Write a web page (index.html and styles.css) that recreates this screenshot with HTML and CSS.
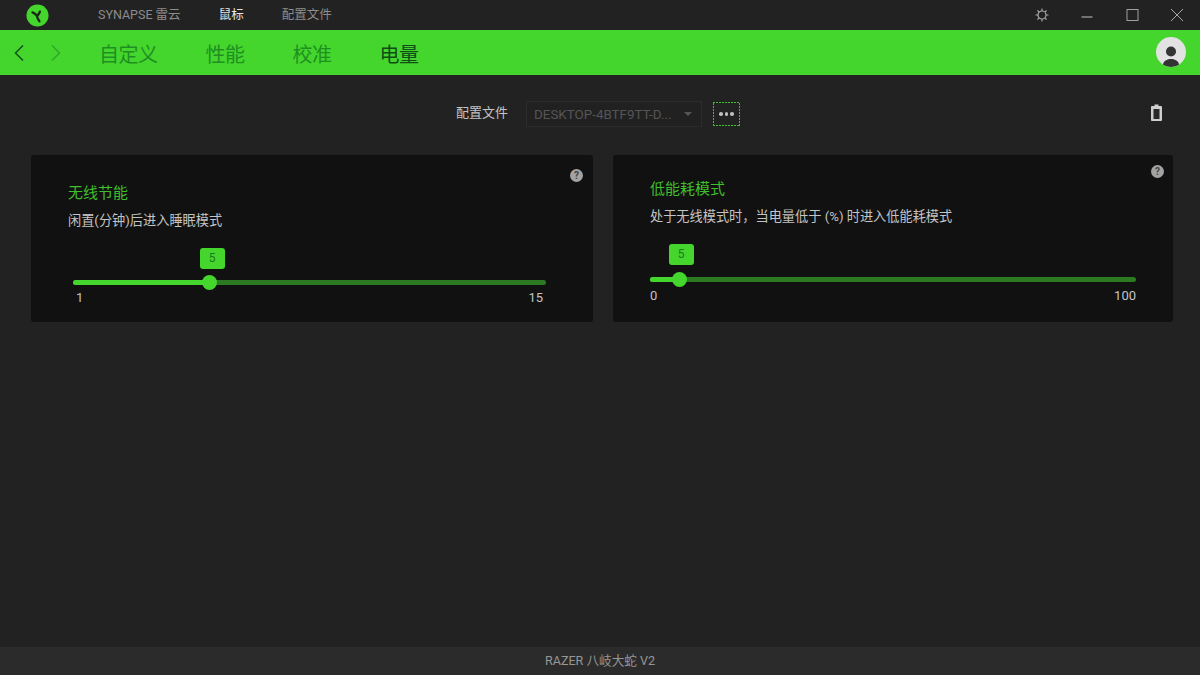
FILE: index.html
```html
<!DOCTYPE html>
<html lang="zh-CN">
<head>
<meta charset="utf-8">
<title>Razer Synapse</title>
<link rel="stylesheet" href="styles.css">
</head>
<body>
<div class="app">
  <header class="titlebar">
    <svg class="logo" viewBox="0 0 24 24" width="23" height="23">
      <circle cx="12" cy="12" r="11.5" fill="#44d62c"/>
      <path d="M11.500 12.500 Q11.800 15.500 14 18 M11.500 12.500 Q9.500 9.800 6.800 8.800 M11.500 12.500 Q13.500 10.800 14.500 8" stroke="#1a2a18" stroke-width="2.500" fill="none" stroke-linecap="round"/>
    </svg>
    <nav class="mainnav">
      <span class="mainnav-item">SYNAPSE 雷云</span>
      <span class="mainnav-item is-active">鼠标</span>
      <span class="mainnav-item">配置文件</span>
    </nav>
    <div class="winctrls">
      <svg class="winicon" viewBox="0 0 14 14" width="14" height="14">
        <circle cx="7" cy="7" r="4" fill="none" stroke="#a8a8a8" stroke-width="1.2"/>
        <path d="M7 0.500V3M7 11V13.500M0.500 7H3M11 7H13.500M2.400 2.400L4 4M10 10L11.600 11.600M2.400 11.600L4 10M10 4L11.600 2.400" stroke="#a8a8a8" stroke-width="1.100"/>
      </svg>
      <svg class="winicon" viewBox="0 0 14 14" width="14" height="14">
        <path d="M1.500 9H12.500" stroke="#a8a8a8" stroke-width="1.200"/>
      </svg>
      <svg class="winicon" viewBox="0 0 14 14" width="14" height="14">
        <rect x="2" y="1.500" width="11" height="11" fill="none" stroke="#a0a0a0" stroke-width="1"/>
      </svg>
      <svg class="winicon" viewBox="0 0 14 14" width="14" height="14">
        <path d="M1 1L13 13M13 1L1 13" stroke="#a8a8a8" stroke-width="1"/>
      </svg>
    </div>
  </header>

  <div class="tabbar">
    <svg class="arrow" viewBox="0 0 12 18" width="12" height="18">
      <path d="M10 1.500L2.500 9L10 16.500" fill="none" stroke="#14501a" stroke-width="1.500"/>
    </svg>
    <svg class="arrow arrow-next" viewBox="0 0 12 18" width="12" height="18">
      <path d="M2 1.500L9.500 9L2 16.500" fill="none" stroke="#2fa82a" stroke-width="1.500"/>
    </svg>
    <nav class="tabs">
      <span class="tab">自定义</span>
      <span class="tab">性能</span>
      <span class="tab">校准</span>
      <span class="tab is-active">电量</span>
    </nav>
    <svg class="avatar" viewBox="0 0 30 30" width="30" height="30">
      <defs><clipPath id="avatar-clip"><circle cx="15" cy="15" r="15"/></clipPath></defs>
      <circle cx="15" cy="15" r="15" fill="#e2e2e2"/>
      <g clip-path="url(#avatar-clip)">
        <circle cx="15" cy="14.500" r="5" fill="#333"/>
        <path d="M7 30V28C7 24.500 10.500 22 15 22S23 24.500 23 28V30Z" fill="#333"/>
      </g>
    </svg>
  </div>

  <main class="content">
    <div class="profile-row">
      <span class="profile-label">配置文件</span>
      <div class="select">
        <span class="select-text">DESKTOP-4BTF9TT-D...</span>
        <span class="select-caret"></span>
      </div>
      <button class="more" type="button"><i></i><i></i><i></i></button>
      <svg class="battery" viewBox="0 0 11 17" width="11" height="17">
        <path d="M3.500 0.500H7.500V2H10C10.500 2 11 2.500 11 3V16C11 16.500 10.500 17 10 17H1C0.500 17 0 16.500 0 16V3C0 2.500 0.500 2 1 2H3.500Z" fill="#cfcfcf"/>
        <rect x="2.500" y="5" width="6" height="10" fill="#2a2a2a"/>
      </svg>
    </div>

    <div class="cards">
      <section class="card card-left">
        <span class="help">?</span>
        <h2 class="card-title">无线节能</h2>
        <p class="card-desc">闲置(分钟)后进入睡眠模式</p>
        <div class="slider slider-left">
          <div class="track">
            <div class="fill" style="width:137px"></div>
            <div class="thumb" style="left:137px"></div>
            <div class="bubble" style="left:139px">5</div>
          </div>
          <div class="scale scale-left"><span>1</span><span>15</span></div>
        </div>
      </section>
      <section class="card card-right">
        <span class="help">?</span>
        <h2 class="card-title">低能耗模式</h2>
        <p class="card-desc">处于无线模式时，当电量低于 (%) 时进入低能耗模式</p>
        <div class="slider slider-right">
          <div class="track">
            <div class="fill" style="width:30px"></div>
            <div class="thumb" style="left:30px"></div>
            <div class="bubble" style="left:31px">5</div>
          </div>
          <div class="scale"><span>0</span><span>100</span></div>
        </div>
      </section>
    </div>
  </main>

  <footer class="statusbar">RAZER 八岐大蛇 V2</footer>
</div>
</body>
</html>
```
FILE: styles.css
```css
* { box-sizing: border-box; }
html, body { margin: 0; padding: 0; }
body {
  width: 1200px;
  height: 675px;
  overflow: hidden;
  background: #222;
  font-family: Roboto, "Noto Sans CJK SC", sans-serif;
}
.app { display: flex; flex-direction: column; height: 675px; }

.titlebar {
  height: 30px;
  flex: none;
  display: flex;
  align-items: center;
  background: #222;
  padding-left: 26px;
}
.logo { flex: none; }
.mainnav { display: flex; gap: 38px; margin-left: 49px; }
.mainnav-item { font-size: 12.500px; line-height: 30px; color: #8c8c8c; }
.mainnav-item.is-active { color: #e6e6e6; }
.winctrls { display: flex; align-items: center; gap: 31px; margin-left: auto; margin-right: 16px; }
.winicon { display: block; }

.tabbar {
  height: 45px;
  flex: none;
  display: flex;
  align-items: center;
  background: #44d62c;
  padding-left: 13px;
  padding-right: 14px;
}
.arrow { flex: none; margin-top: 1px; }
.arrow-next { margin-left: 25px; }
.tabs { display: flex; gap: 48px; margin-left: 37px; padding-top: 5px; }
.tab { font-size: 20px; line-height: 40px; color: #1f8f22; letter-spacing: -0.500px; }
.tab.is-active { color: #0f4d17; }
.avatar { margin-left: auto; margin-top: -1px; }

.content { flex: 1; display: flex; flex-direction: column; min-height: 0; }
.profile-row {
  display: flex;
  align-items: center;
  height: 26px;
  margin-top: 26px;
  padding-left: 456px;
}
.profile-label { font-size: 13px; line-height: 22px; padding-bottom: 3px; color: #c4c4c4; width: 70px; }
.select {
  width: 176px;
  height: 26px;
  display: flex;
  align-items: center;
  justify-content: space-between;
  padding: 0 9px 0 7px;
  background: #212121;
  border: 1px solid #2c2c2c;
}
.select-text { font-size: 13.400px; color: #555; white-space: nowrap; }
.select-caret {
  width: 0;
  height: 0;
  border-left: 4px solid transparent;
  border-right: 4px solid transparent;
  border-top: 4px solid #555;
}
.more {
  width: 27px;
  height: 24px;
  margin-left: 11px;
  padding: 0;
  display: flex;
  align-items: center;
  justify-content: center;
  gap: 2px;
  border: 0;
  background:
    repeating-linear-gradient(90deg, #3cc02a 0 2px, transparent 2px 3px) top / 100% 1px no-repeat,
    repeating-linear-gradient(90deg, #3cc02a 0 2px, transparent 2px 3px) bottom / 100% 1px no-repeat,
    repeating-linear-gradient(0deg, #3cc02a 0 2px, transparent 2px 3px) left / 1px 100% no-repeat,
    repeating-linear-gradient(0deg, #3cc02a 0 2px, transparent 2px 3px) right / 1px 100% no-repeat;
}
.more i { width: 3.500px; height: 3.500px; border-radius: 50%; background: #bdbdbd; }
.battery { margin-left: 411px; margin-top: -3px; }

.cards { display: flex; gap: 20px; margin-top: 28px; padding-left: 31px; }
.card {
  position: relative;
  height: 167px;
  background: #111;
  border-radius: 3px;
}
.card-left { width: 562px; padding: 28px 37px 0; }
.card-right { width: 560px; padding: 24px 37px 0; }
.card-title { margin: 0; font-size: 15px; line-height: 20px; font-weight: 400; color: #3fbf2c; }
.card-desc { margin: 8px 0 0; font-size: 13.200px; line-height: 20px; color: #c4c4c4; }
.help {
  position: absolute;
  top: 14px;
  right: 10px;
  width: 13px;
  height: 13px;
  border-radius: 50%;
  background: #a3a3a3;
  color: #444;
  font-size: 10px;
  font-weight: 700;
  line-height: 13px;
  text-align: center;
}
.card-right .help { top: 10px; right: 9px; }

.slider-left { margin: 49px 10px 0 5px; }
.slider-right { margin: 50px 0 0 0; width: 486px; }
.track { position: relative; height: 5px; background: #2b7a22; border-radius: 3px; }
.fill { position: absolute; left: 0; top: 0; height: 5px; background: #44d62c; border-radius: 3px; }
.thumb {
  position: absolute;
  top: -5px;
  width: 15px;
  height: 15px;
  margin-left: -8px;
  border-radius: 50%;
  background: #44d62c;
}
.bubble {
  position: absolute;
  top: -32px;
  width: 25px;
  height: 21px;
  margin-left: -12.500px;
  border-radius: 3px;
  background: #44d62c;
  color: #1c7a20;
  font-size: 12px;
  line-height: 21px;
  text-align: center;
}
.slider-right .bubble { top: -33px; }
.scale {
  display: flex;
  justify-content: space-between;
  margin-top: 5px;
  font-size: 13px;
  line-height: 16px;
  color: #c4c4c4;
}
.slider-right .scale { margin-top: 6px; }
.scale-left { padding: 0 3px; }

.statusbar {
  height: 28px;
  flex: none;
  background: #2b2b2b;
  color: #969696;
  font-size: 12.600px;
  line-height: 28px;
  text-align: center;
}
```
